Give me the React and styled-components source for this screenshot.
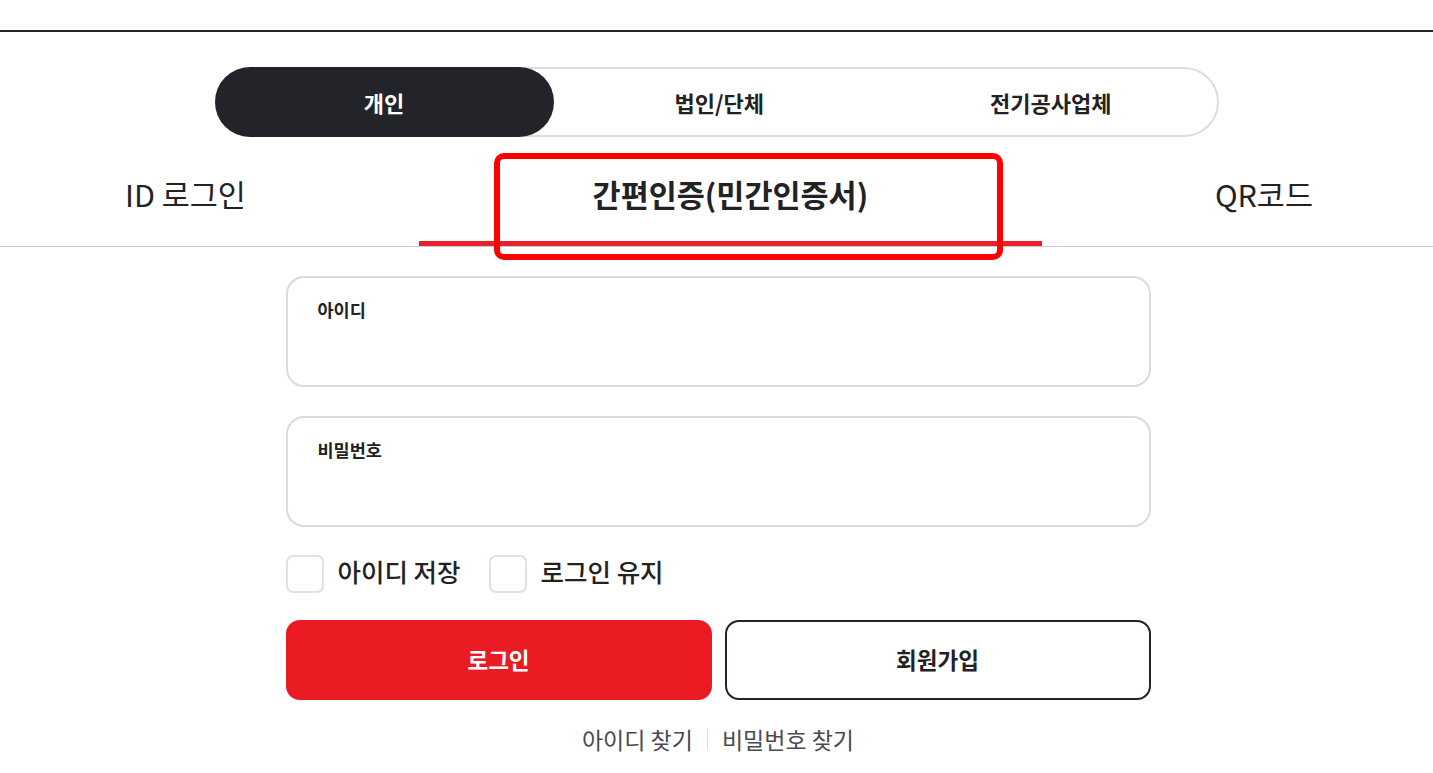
import React, { useState } from "react";
import styled, { createGlobalStyle } from "styled-components";

const Global = createGlobalStyle`
  html, body { margin: 0; padding: 0; background: #fff; }
  body { font-family: "Noto Sans CJK KR", "Noto Sans", sans-serif; color: #222; }
  * { box-sizing: border-box; }
`;

const Page = styled.div`
  width: 100%;
  padding-top: 30px;
`;

const TopRule = styled.div`
  height: 2px;
  background: #23232b;
`;

const Segment = styled.div`
  margin: 35px auto 0;
  width: 1004px;
  height: 70px;
  border: 2px solid #dcdde3;
  border-radius: 35px;
  display: grid;
  grid-template-columns: 337px 1fr 1fr;
`;

const SegButton = styled.button`
  border: none;
  background: ${(p) => (p.$active ? "#23242a" : "transparent")};
  color: ${(p) => (p.$active ? "#fff" : "#222")};
  border-radius: 36px;
  margin: ${(p) => (p.$active ? "-2px 0 -2px -2px" : "0")};
  font-family: inherit;
  font-size: 22px;
  font-weight: 700;
  cursor: pointer;
  padding: 0;
`;

const TabRow = styled.div`
  margin-top: 13px;
  height: 97px;
  border-bottom: 1px solid #c9c9d1;
  display: flex;
  justify-content: space-between;
  padding: 0 120px 0 125px;
`;

const Tab = styled.div`
  position: relative;
  height: 96px;
  padding-bottom: 8px;
  display: flex;
  align-items: center;
  justify-content: center;
  width: ${(p) => (p.$w ? `${p.$w}px` : "auto")};
  font-size: 30.5px;
  font-weight: ${(p) => (p.$active ? 700 : 400)};
  color: #222;
  cursor: pointer;
`;

const Underline = styled.span`
  position: absolute;
  left: 0;
  right: 0;
  bottom: 0;
  height: 5px;
  background: #e8202a;
`;

const Annotation = styled.div`
  position: absolute;
  left: 494px;
  top: 153px;
  width: 509px;
  height: 107px;
  border: 6px solid #ff0000;
  border-radius: 10px;
  pointer-events: none;
`;

const Form = styled.div`
  width: 865px;
  margin: 29px auto 0;
  padding-left: 3px;
  box-sizing: content-box;
`;

const Field = styled.label`
  display: block;
  height: 111px;
  border: 2px solid #d9dae2;
  border-radius: 18px;
  padding: 20px 30px;
  margin-bottom: ${(p) => (p.$mb ? `${p.$mb}px` : "0")};
`;

const FieldLabel = styled.div`
  font-size: 17.5px;
  font-weight: 700;
  line-height: 24px;
  color: #222;
`;

const Input = styled.input`
  display: block;
  width: 100%;
  border: none;
  outline: none;
  font-family: inherit;
  font-size: 18px;
  margin-top: 8px;
  background: transparent;
`;

const CheckRow = styled.div`
  margin-top: 28px;
  height: 38px;
  display: flex;
  align-items: center;
  gap: 28px;
`;

const CheckItem = styled.label`
  display: flex;
  align-items: center;
  gap: 14px;
  cursor: pointer;
`;

const Box = styled.span`
  width: 38px;
  height: 38px;
  border: 2px solid #dde1e8;
  border-radius: 7px;
  background: ${(p) => (p.$on ? "#23242a" : "#fff")};
`;

const CheckText = styled.span`
  font-size: 25.5px;
  font-weight: 500;
  line-height: 32px;
  padding-bottom: 6px;
  color: #222;
`;

const ButtonRow = styled.div`
  margin-top: 27px;
  display: grid;
  grid-template-columns: 1fr 1fr;
  gap: 13px;
`;

const Button = styled.button`
  height: 80px;
  border-radius: 14px;
  font-family: inherit;
  font-size: 22.5px;
  font-weight: 700;
  cursor: pointer;
  padding: 0 0 3px;
  border: 2px solid ${(p) => (p.$primary ? "#ea1b23" : "#23232b")};
  background: ${(p) => (p.$primary ? "#ea1b23" : "#fff")};
  color: ${(p) => (p.$primary ? "#fff" : "#222")};
`;

const Links = styled.div`
  margin-top: 23px;
  display: flex;
  justify-content: center;
  align-items: center;
`;

const LinkText = styled.a`
  font-size: 23px;
  line-height: 32px;
  color: #4a4a4f;
  text-decoration: none;
  cursor: pointer;
`;

const Sep = styled.span`
  width: 1px;
  height: 20px;
  background: #dedede;
  margin: 0 14px;
`;

export default function App() {
  const [seg, setSeg] = useState(0);
  const [tab, setTab] = useState(1);
  const [saveId, setSaveId] = useState(false);
  const [keep, setKeep] = useState(false);
  const segs = ["개인", "법인/단체", "전기공사업체"];
  const tabs = [
    { t: "ID 로그인" },
    { t: "간편인증(민간인증서)", w: 623 },
    { t: "QR코드" },
  ];
  return (
    <Page>
      <Global />
      <TopRule />
      <Segment>
        {segs.map((s, i) => (
          <SegButton key={s} $active={seg === i} onClick={() => setSeg(i)}>
            {s}
          </SegButton>
        ))}
      </Segment>
      <TabRow>
        {tabs.map((t, i) => (
          <Tab key={t.t} $active={tab === i} $w={t.w} onClick={() => setTab(i)}>
            {t.t}
            {tab === i && <Underline />}
          </Tab>
        ))}
      </TabRow>
      <Annotation />
      <Form>
        <Field $mb={29}>
          <FieldLabel>아이디</FieldLabel>
          <Input type="text" />
        </Field>
        <Field>
          <FieldLabel>비밀번호</FieldLabel>
          <Input type="password" />
        </Field>
        <CheckRow>
          <CheckItem onClick={() => setSaveId(!saveId)}>
            <Box $on={saveId} />
            <CheckText>아이디 저장</CheckText>
          </CheckItem>
          <CheckItem onClick={() => setKeep(!keep)}>
            <Box $on={keep} />
            <CheckText>로그인 유지</CheckText>
          </CheckItem>
        </CheckRow>
        <ButtonRow>
          <Button $primary>로그인</Button>
          <Button>회원가입</Button>
        </ButtonRow>
        <Links>
          <LinkText>아이디 찾기</LinkText>
          <Sep />
          <LinkText>비밀번호 찾기</LinkText>
        </Links>
      </Form>
    </Page>
  );
}
